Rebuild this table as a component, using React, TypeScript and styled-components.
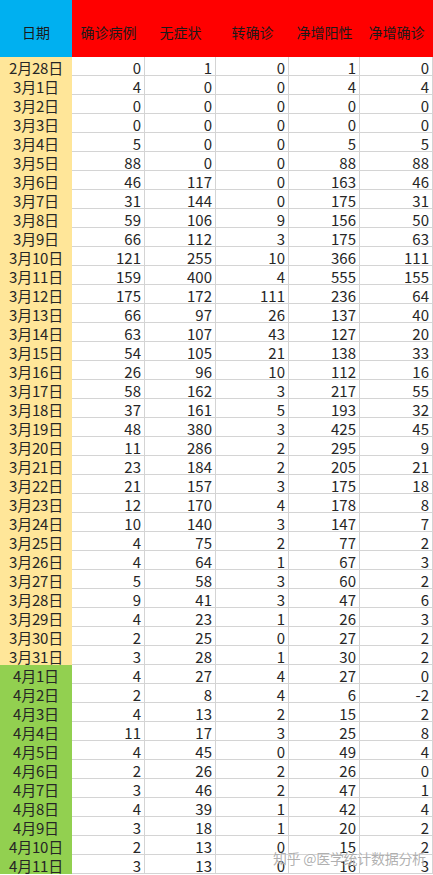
import React from "react";
import styled, { createGlobalStyle } from "styled-components";

const Global = createGlobalStyle`
  html, body { margin: 0; padding: 0; background: #ffffff; }
  body { font-family: "Noto Sans CJK SC", "Noto Sans", sans-serif; }
`;

const COLS = "72px 73px 71px 73px 71px 73px";

const Sheet = styled.div`
  position: relative;
  width: 433px;
  display: grid;
  grid-template-columns: ${COLS};
  grid-auto-rows: 19px;
  grid-template-rows: 57px;
  overflow: hidden;
`;

const HeadCell = styled.div<{ $bg: string }>`
  background: ${(p) => p.$bg};
  display: flex;
  align-items: center;
  justify-content: center;
  padding-top: 6px;
  box-sizing: border-box;
  font-size: 14px;
  color: #1a1a1a;
  white-space: nowrap;
`;

const DateCell = styled.div<{ $bg: string }>`
  background: ${(p) => p.$bg};
  font-size: 15px;
  line-height: 19px;
  padding-top: 1px;
  box-sizing: border-box;
  text-align: center;
  color: #262626;
  white-space: nowrap;
  letter-spacing: -0.2px;
`;

const NumCell = styled.div`
  box-sizing: border-box;
  border-right: 1px solid #d4d4d4;
  border-bottom: 1px solid #d4d4d4;
  font-size: 15px;
  line-height: 19px;
  padding: 1px 3px 0 0;
  text-align: right;
  color: #262626;
  white-space: nowrap;
`;

const Watermark = styled.div`
  position: absolute;
  left: 273px;
  top: 848px;
  font-size: 14px;
  color: rgba(150, 150, 150, 0.75);
  text-shadow: 0 0 1px rgba(255, 255, 255, 0.9);
  white-space: nowrap;
  letter-spacing: -0.3px;
  pointer-events: none;
`;

const headers = ["确诊病例", "无症状", "转确诊", "净增阳性", "净增确诊"];

const raw = `2月28日 0 1 0 1 0
3月1日 4 0 0 4 4
3月2日 0 0 0 0 0
3月3日 0 0 0 0 0
3月4日 5 0 0 5 5
3月5日 88 0 0 88 88
3月6日 46 117 0 163 46
3月7日 31 144 0 175 31
3月8日 59 106 9 156 50
3月9日 66 112 3 175 63
3月10日 121 255 10 366 111
3月11日 159 400 4 555 155
3月12日 175 172 111 236 64
3月13日 66 97 26 137 40
3月14日 63 107 43 127 20
3月15日 54 105 21 138 33
3月16日 26 96 10 112 16
3月17日 58 162 3 217 55
3月18日 37 161 5 193 32
3月19日 48 380 3 425 45
3月20日 11 286 2 295 9
3月21日 23 184 2 205 21
3月22日 21 157 3 175 18
3月23日 12 170 4 178 8
3月24日 10 140 3 147 7
3月25日 4 75 2 77 2
3月26日 4 64 1 67 3
3月27日 5 58 3 60 2
3月28日 9 41 3 47 6
3月29日 4 23 1 26 3
3月30日 2 25 0 27 2
3月31日 3 28 1 30 2
4月1日 4 27 4 27 0
4月2日 2 8 4 6 -2
4月3日 4 13 2 15 2
4月4日 11 17 3 25 8
4月5日 4 45 0 49 4
4月6日 2 26 2 26 0
4月7日 3 46 2 47 1
4月8日 4 39 1 42 4
4月9日 3 18 1 20 2
4月10日 2 13 0 15 2
4月11日 3 13 0 16 3`;

const rows = raw.split("\n").map((l) => l.trim().split(/\s+/));

export default function App() {
  return (
    <>
      <Global />
      <Sheet>
        <HeadCell $bg="#00b0f0">日期</HeadCell>
        {headers.map((h) => (
          <HeadCell key={h} $bg="#ff0000">
            {h}
          </HeadCell>
        ))}
        {rows.map((r) => (
          <React.Fragment key={r[0]}>
            <DateCell $bg={r[0].startsWith("4月") ? "#92d050" : "#ffe699"}>
              {r[0]}
            </DateCell>
            {r.slice(1).map((v, i) => (
              <NumCell key={i}>{v}</NumCell>
            ))}
          </React.Fragment>
        ))}
        <Watermark>知乎 @医学统计数据分析</Watermark>
      </Sheet>
    </>
  );
}
